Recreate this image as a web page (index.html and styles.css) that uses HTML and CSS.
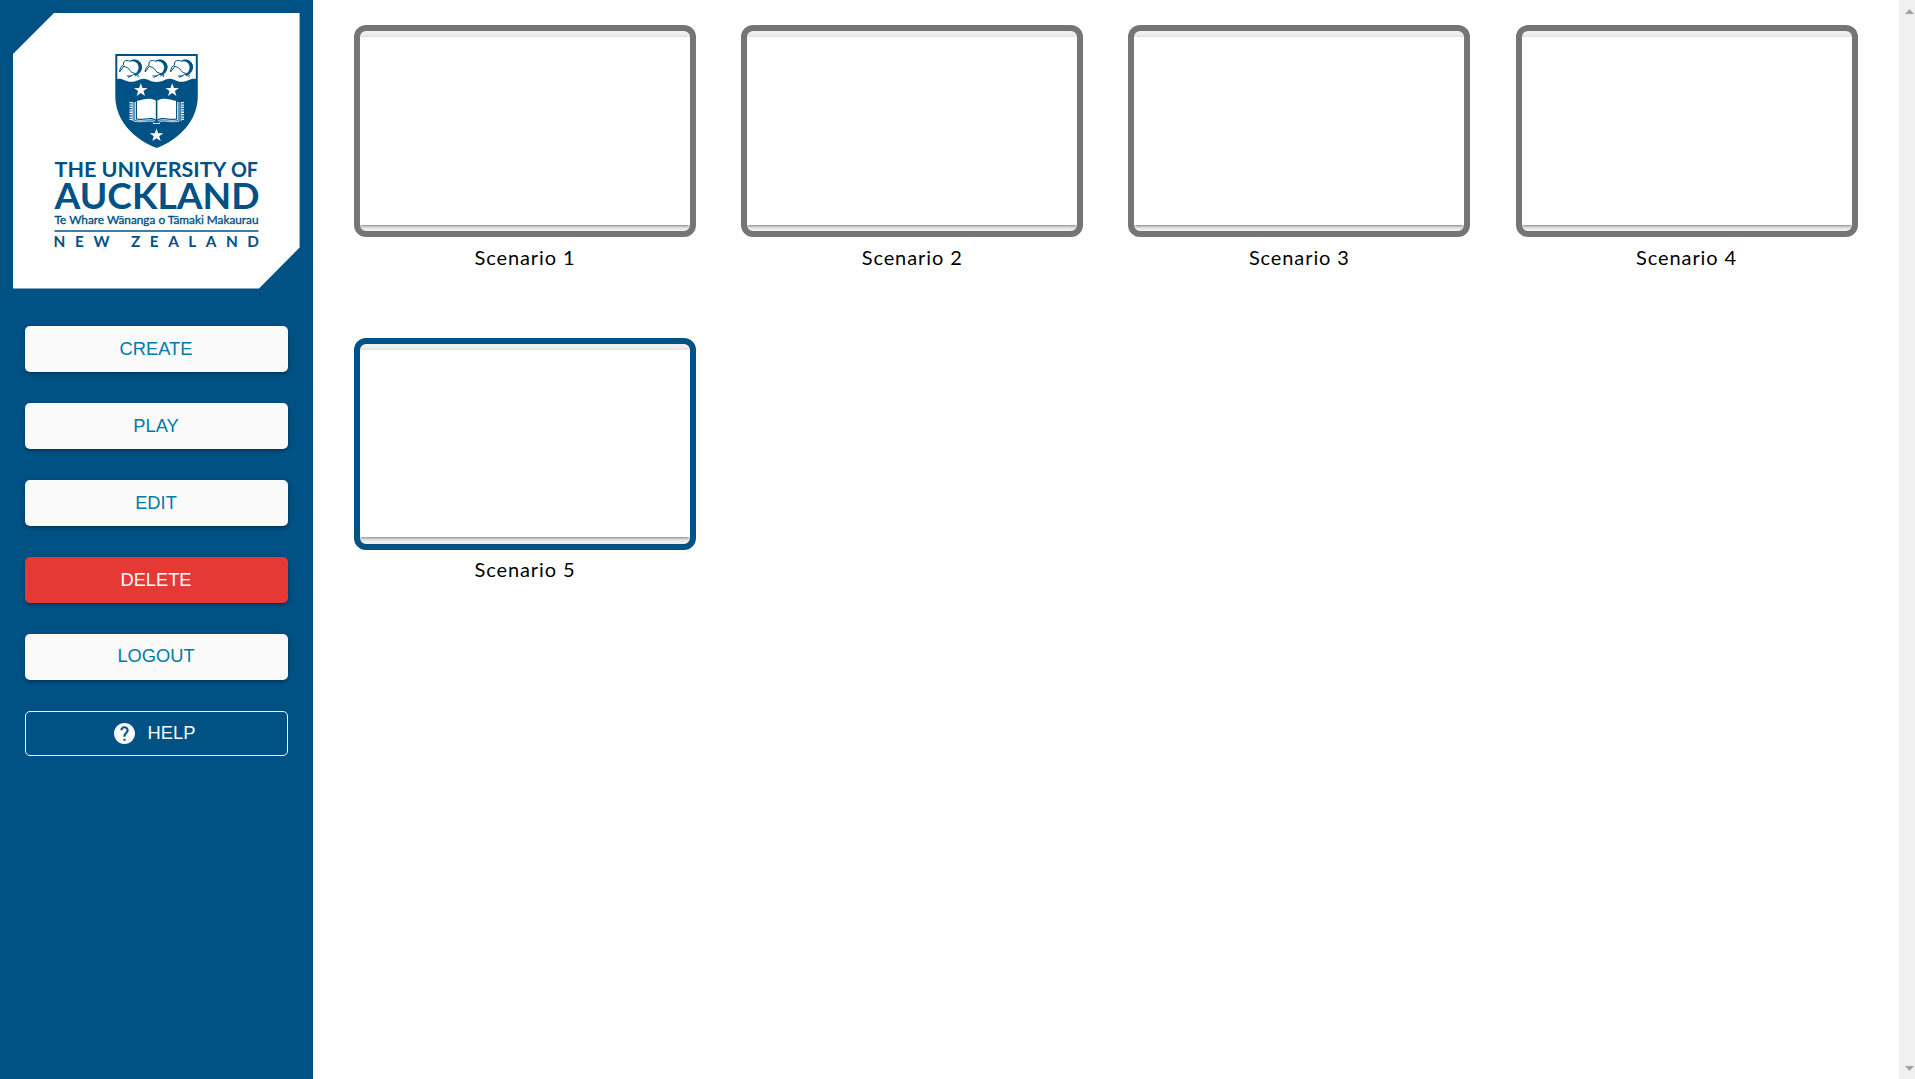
FILE: index.html
```html
<!DOCTYPE html>
<html lang="en">
<head>
<meta charset="utf-8">
<title>Scenarios</title>
<link rel="stylesheet" href="styles.css">
</head>
<body>
<div class="layout">
  <aside class="sidebar">
    <svg class="logo" viewBox="13 13 287 276" role="img" aria-label="The University of Auckland">
      <defs>
        <path id="star" d="M0-7 1.7-2.2H6.8L2.7.8 4.2 5.7 0 2.8-4.2 5.7-2.7.8-6.8-2.2H-1.7Z"/>
        <g id="kiwi" fill="none" stroke="#005184">
          <path d="M1 13.3C1.600 9.500 3 7.500 5 6.400C4.500 3.500 6 1.800 8.500 2C10.500 2 11 3 12 2.500C17 0 22.500 2.500 23 8C23 13 20 16 16.500 17.500" stroke-width="1"/>
          <path d="M12 2.500C17 0 22.500 2.500 23 8C23 13 20 15.500 16 16.500C20 13 21 10 20 7C19 3.500 16 2 12 2.500Z" fill="#005184" stroke-width=".6"/>
          <path d="M1 13.500 5.500 7.500M5 7.500C8 9 10 9 11.500 12L14 14.500M14 14C16 15 18 15 20 17L19 18.500M18 15.500 15 16 9.500 19M13 17.500 8.500 17.500" stroke-width="1"/>
        </g>
      </defs>
      <path fill="#fff" d="M54 13H299.600V247.500L259 288.500H13V54Z"/>
      <path fill="#005184" d="M115.300 54H197.800V96C197.800 120 180 139 156.700 148C133 139 115.300 120 115.300 96Z"/>
      <path fill="#fff" d="M117.300 56H195.800V79C191 77.500 188 81.500 182 81.800C176 82 174 78.500 169.500 78.800C165 79 163 82 156.500 82C150 82 148 78.800 143.500 78.800C139 78.800 137 82 131 81.800C125 81.500 122 77.500 117.300 79Z"/>
      <use href="#kiwi" x="118.500" y="58.500"/>
      <use href="#kiwi" x="144" y="58.500"/>
      <use href="#kiwi" x="169.500" y="58.500"/>
      <g fill="#fff">
        <use href="#star" x="140.800" y="90.300"/>
        <use href="#star" x="172.200" y="90.300"/>
        <use href="#star" x="156.500" y="135.400"/>
        <path d="M137 101C143 99.500 150 97 155.800 100.500V119.500C150 116 143 120 137 118.500ZM176 101C170 99.500 163 97 157.400 100.500V119.500C163 116 170 120 176 118.500Z"/>
      </g>
      <g fill="none" stroke="#fff" stroke-width=".8">
        <path d="M135.500 102V119.800C143 122 150 117.500 155.500 121.200M177.500 102V119.800C170 122 163 117.500 157.500 121.200M134 102V121.200C143 123.200 150 119 154 122.500M179 102V121.200C170 123.200 163 119 159 122.500M153 123.500H160"/>
        <path d="M130.700 102V121M182.800 102V121" stroke-width="2.400" stroke-dasharray="1.300 1.100"/>
        <path d="M132.300 102V121M181.200 102V121"/>
      </g>
      <g class="logo-text">
        <text x="54.500" y="176.500" font-size="21.500" textLength="172" lengthAdjust="spacingAndGlyphs">THE UNIVERSITY</text>
        <text x="231" y="176.500" font-size="21.500" textLength="27" lengthAdjust="spacingAndGlyphs">OF</text>
        <text x="54.500" y="209.300" font-size="36.500" textLength="205" lengthAdjust="spacingAndGlyphs">AUCKLAND</text>
        <text class="logo-maori" x="54.500" y="224" font-size="12.200" textLength="204" lengthAdjust="spacingAndGlyphs">Te Whare Wānanga o Tāmaki Makaurau</text>
        <text x="53.500" y="247.300" font-size="15.300" textLength="56">NEW</text>
        <text x="131" y="247.300" font-size="15.300" textLength="128">ZEALAND</text>
      </g>
      <path d="M54.500 231H258.500" stroke="#005184" stroke-width="1.400"/>
    </svg>
    <nav class="menu">
      <button class="btn">CREATE</button>
      <button class="btn">PLAY</button>
      <button class="btn">EDIT</button>
      <button class="btn btn-danger">DELETE</button>
      <button class="btn btn-logout">LOGOUT</button>
      <button class="btn btn-outline">
        <svg class="help-icon" viewBox="2 2 20 20"><path fill="currentColor" d="M12 2C6.480 2 2 6.480 2 12s4.480 10 10 10 10-4.480 10-10S17.520 2 12 2zm1 17h-2v-2h2v2zm2.070-7.750l-.9.920C13.450 12.900 13 13.500 13 15h-2v-.5c0-1.100.45-2.100 1.170-2.830l1.240-1.260c.37-.36.590-.86.590-1.410 0-1.100-.9-2-2-2s-2 .9-2 2H8c0-2.210 1.790-4 4-4s4 1.790 4 4c0 .88-.36 1.680-.93 2.250z"/></svg>
        <span>HELP</span>
      </button>
    </nav>
  </aside>
  <main class="grid">
    <figure class="scenario"><div class="thumb"><div class="preview"></div></div><figcaption>Scenario 1</figcaption></figure>
    <figure class="scenario"><div class="thumb"><div class="preview"></div></div><figcaption>Scenario 2</figcaption></figure>
    <figure class="scenario"><div class="thumb"><div class="preview"></div></div><figcaption>Scenario 3</figcaption></figure>
    <figure class="scenario"><div class="thumb"><div class="preview"></div></div><figcaption>Scenario 4</figcaption></figure>
    <figure class="scenario"><div class="thumb selected"><div class="preview"></div></div><figcaption>Scenario 5</figcaption></figure>
  </main>
  <div class="scrollbar"><i class="arrow arrow-up"></i><i class="arrow arrow-down"></i></div>
</div>
</body>
</html>
```
FILE: styles.css
```css
* { box-sizing: border-box; }
body { margin: 0; background: #fff; overflow: hidden; }
.layout { display: flex; height: 1079px; }
.sidebar { width: 313px; flex: none; background: #005184; padding: 13px 13px 0; }
.logo { display: block; width: 287px; height: 276px; }
.logo-text { font-family: Lato, sans-serif; font-weight: 700; fill: #005184; }
.logo-maori { font-weight: 400; stroke: #005184; stroke-width: .35px; }
.menu { display: flex; flex-direction: column; gap: 31px; padding: 37px 12px 0; }
.btn {
  display: flex; align-items: center; justify-content: center;
  height: 46px; padding: 0 1px 1px 0; border: 0; border-radius: 5px;
  background: #fafafa; color: #007ba7;
  font: 18.3px/30px "Liberation Sans", Arial, sans-serif;
  box-shadow: 0 3px 3px -2px rgba(0,0,0,.2), 0 2px 4px rgba(0,0,0,.14), 0 1px 5px rgba(0,0,0,.12);
}
.btn-danger { background: #e53935; color: #fff; }
.btn-logout { padding-bottom: 2px; }
.btn-outline {
  height: 45px; gap: 13px; padding: 0 4px 2px 0; border: 1px solid #fafafa;
  background: none; color: #fafafa; box-shadow: none;
}
.help-icon { width: 21px; height: 21px; margin-top: 2px; }
.grid {
  flex: 1; display: grid; align-content: start;
  grid-template-columns: repeat(4, 342px); column-gap: 45.2px;
  grid-auto-rows: 313px; padding: 25px 0 0 41px;
}
.scenario { margin: 0; }
.thumb {
  height: 212px; border: 6px solid #757575; border-radius: 12px;
  padding: 6px 0; overflow: hidden; background: #f0f0f0;
}
.thumb.selected { border-color: #005184; }
.thumb.selected .preview { height: 187px; }
.thumb.selected + figcaption { padding-top: 5px; }
.preview {
  height: 188px; background: #fff;
  box-shadow: 0 1px 5px rgba(0,0,0,.2), 0 2px 2px rgba(0,0,0,.14), 0 3px 1px -2px rgba(0,0,0,.12);
}
figcaption {
  padding-top: 6px; text-align: center; color: #000;
  font: 20px/28px Lato, sans-serif; letter-spacing: .9px;
}
.scrollbar {
  width: 16px; flex: none; background: #f0f0f0;
  display: flex; flex-direction: column; justify-content: space-between;
  align-items: flex-end; padding: 9px 1px 8px 0;
}
.arrow { width: 9px; height: 5px; background: #a3a3a3; }
.arrow-up { clip-path: polygon(50% 0, 100% 100%, 0 100%); }
.arrow-down { clip-path: polygon(0 0, 100% 0, 50% 100%); }
```
